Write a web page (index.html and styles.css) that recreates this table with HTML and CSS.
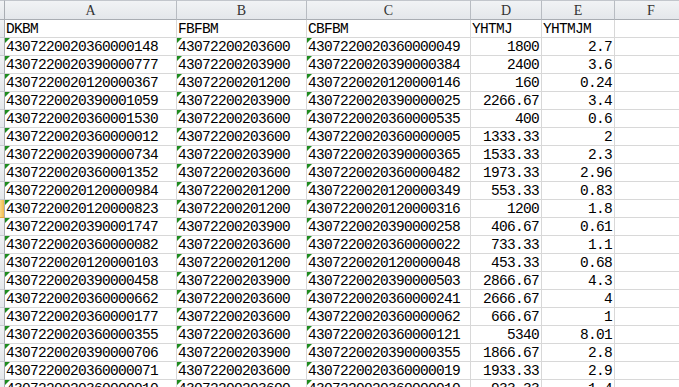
FILE: index.html
```html
<!DOCTYPE html>
<html lang="zh-CN">
<head>
    <meta charset="UTF-8">
    <title>Sheet1</title>
    <link rel="stylesheet" href="styles.css">
</head>
<body>
    <div class="sheet" id="sheet">
        <div class="corner"></div>
        <div class="col-head">A</div>
        <div class="col-head">B</div>
        <div class="col-head">C</div>
        <div class="col-head">D</div>
        <div class="col-head">E</div>
        <div class="col-head">F</div>
    </div>

    <script>
        const rows = [
            ['DKBM', 'FBFBM', 'CBFBM', 'YHTMJ', 'YHTMJM'],
            ['4307220020360000148', '43072200203600', '4307220020360000049', '1800', '2.7'],
            ['4307220020390000777', '43072200203900', '4307220020390000384', '2400', '3.6'],
            ['4307220020120000367', '43072200201200', '4307220020120000146', '160', '0.24'],
            ['4307220020390001059', '43072200203900', '4307220020390000025', '2266.67', '3.4'],
            ['4307220020360001530', '43072200203600', '4307220020360000535', '400', '0.6'],
            ['4307220020360000012', '43072200203600', '4307220020360000005', '1333.33', '2'],
            ['4307220020390000734', '43072200203900', '4307220020390000365', '1533.33', '2.3'],
            ['4307220020360001352', '43072200203600', '4307220020360000482', '1973.33', '2.96'],
            ['4307220020120000984', '43072200201200', '4307220020120000349', '553.33', '0.83'],
            ['4307220020120000823', '43072200201200', '4307220020120000316', '1200', '1.8'],
            ['4307220020390001747', '43072200203900', '4307220020390000258', '406.67', '0.61'],
            ['4307220020360000082', '43072200203600', '4307220020360000022', '733.33', '1.1'],
            ['4307220020120000103', '43072200201200', '4307220020120000048', '453.33', '0.68'],
            ['4307220020390000458', '43072200203900', '4307220020390000503', '2866.67', '4.3'],
            ['4307220020360000662', '43072200203600', '4307220020360000241', '2666.67', '4'],
            ['4307220020360000177', '43072200203600', '4307220020360000062', '666.67', '1'],
            ['4307220020360000355', '43072200203600', '4307220020360000121', '5340', '8.01'],
            ['4307220020390000706', '43072200203900', '4307220020390000355', '1866.67', '2.8'],
            ['4307220020360000071', '43072200203600', '4307220020360000019', '1933.33', '2.9'],
            ['4307220020360000010', '43072200203600', '4307220020360000010', '933.33', '1.4']
        ];
        const activeRow = 10;
        const sheet = document.getElementById('sheet');

        rows.forEach((row, i) => {
            const head = document.createElement('div');
            head.className = 'row-head' + (i === activeRow ? ' active' : '');
            sheet.appendChild(head);

            row.forEach((value, j) => {
                const cell = document.createElement('div');
                cell.className = 'cell';
                if (j >= 3 && i > 0) cell.classList.add('num');
                if (j < 3 && i > 0) cell.classList.add('text-num');
                cell.textContent = value;
                sheet.appendChild(cell);
            });

            const empty = document.createElement('div');
            empty.className = 'cell';
            sheet.appendChild(empty);
        });
    </script>
</body>
</html>
```

FILE: styles.css
```css
body {
    margin: 0;
    padding: 0;
    background: #ffffff;
    overflow: hidden;
    font-family: 'Liberation Mono', 'DejaVu Sans Mono', monospace;
    font-size: 14.5px;
    letter-spacing: -0.7px;
    color: #000000;
}
.sheet {
    display: grid;
    grid-template-columns: 5px 172px 130px 164px 71px 73px 73px;
    grid-template-rows: 20px;
    grid-auto-rows: 18px;
    width: 688px;
}
.corner,
.col-head,
.row-head {
    box-sizing: border-box;
    background: linear-gradient(#f1f3f5, #e4e7eb);
}
.corner {
    border-top: 1px solid #c2c6cc;
    border-right: 1px solid #a9adb3;
    border-bottom: 1px solid #a9adb3;
}
.col-head {
    border-top: 1px solid #c2c6cc;
    border-right: 1px solid #b8bcc2;
    border-bottom: 1px solid #a9adb3;
    text-align: center;
    line-height: 19px;
    font-family: 'Liberation Serif', serif;
    font-size: 14px;
    letter-spacing: 0;
    color: #333333;
}
.row-head {
    border-right: 1px solid #a9adb3;
    border-bottom: 1px solid #c9ccd1;
}
.row-head.active {
    background: linear-gradient(90deg, #f8d98a, #f2b94a);
    border-bottom-color: #e3a93c;
}
.cell {
    position: relative;
    box-sizing: border-box;
    border-right: 1px solid #d8d8d8;
    border-bottom: 1px solid #d8d8d8;
    padding: 1px 2px 0 1px;
    line-height: 17px;
    white-space: nowrap;
    overflow: hidden;
}
.num {
    text-align: right;
}
.text-num::before {
    content: '';
    position: absolute;
    top: 0;
    left: 0;
    border-top: 5px solid #1e8c1e;
    border-right: 5px solid transparent;
}
```
